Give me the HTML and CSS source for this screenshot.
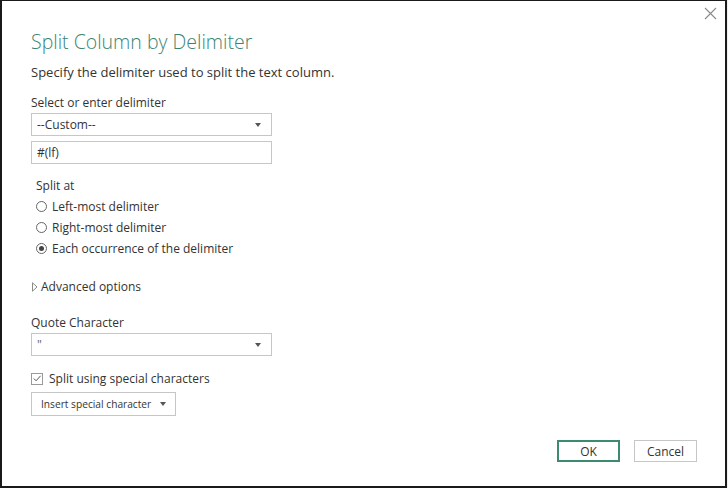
FILE: index.html
```html
<!DOCTYPE html>
<html lang="en">
<head>
    <meta charset="UTF-8">
    <title>Split Column by Delimiter</title>
    <link rel="stylesheet" href="styles.css">
</head>
<body>
    <div class="dialog">
        <div class="close">
            <svg width="13" height="13" viewBox="0 0 13 13"><path d="M1 1 L12 12 M12 1 L1 12" stroke="#8a8a8a" stroke-width="1.1" fill="none"/></svg>
        </div>

        <div class="title">Split Column by Delimiter</div>
        <div class="subtitle">Specify the delimiter used to split the text column.</div>

        <div class="label">Select or enter delimiter</div>
        <div class="select">
            <span>--Custom--</span>
            <span class="caret"></span>
        </div>
        <div class="input">#(lf)</div>

        <div class="split-at">
            <div class="label">Split at</div>
            <div class="radio"><span class="dot"></span>Left-most delimiter</div>
            <div class="radio"><span class="dot"></span>Right-most delimiter</div>
            <div class="radio checked"><span class="dot"></span>Each occurrence of the delimiter</div>
        </div>

        <div class="advanced">
            <svg width="6" height="10" viewBox="0 0 6 10"><path d="M0.5 0.8 L5 5 L0.5 9.2 Z" fill="none" stroke="#8a8a8a" stroke-width="1"/></svg>
            Advanced options
        </div>

        <div class="label">Quote Character</div>
        <div class="select">
            <span class="quote">"</span>
            <span class="caret"></span>
        </div>

        <div class="check">
            <span class="box">
                <svg width="11" height="11" viewBox="0 0 11 11"><path d="M2 5.5 L4.5 8 L9.5 2.5" fill="none" stroke="#555" stroke-width="1.1"/></svg>
            </span>
            Split using special characters
        </div>
        <div class="insert">Insert special character <span class="caret"></span></div>

        <div class="footer">
            <div class="btn ok">OK</div>
            <div class="btn">Cancel</div>
        </div>
    </div>
</body>
</html>
```

FILE: styles.css
```css
* {
    margin: 0;
    padding: 0;
    box-sizing: border-box;
}

body {
    width: 728px;
    height: 488px;
    background: #f0f0f0;
    font-family: 'Open Sans', 'Noto Sans', sans-serif;
    color: #333;
    font-size: 12px;
}

.dialog {
    position: relative;
    width: 727px;
    height: 488px;
    background: #fff;
    border: 2px solid #1a1a1a;
    border-top-width: 1px;
    padding: 27px 29px 0 29px;
}

.close {
    position: absolute;
    top: 6px;
    right: 8px;
}

.title {
    font-size: 19.5px;
    font-weight: 300;
    color: #3a8572;
    line-height: 28px;
}

.subtitle {
    font-size: 13px;
    color: #333;
    margin-top: 6px;
    line-height: 20px;
}

.label {
    line-height: 17px;
}

.subtitle + .label {
    margin-top: 12px;
}

.select,
.input {
    width: 241px;
    height: 23px;
    border: 1px solid #c6c6c6;
    display: flex;
    align-items: center;
    justify-content: space-between;
    padding: 0 10px 0 5px;
    margin-top: 2px;
}

.input {
    margin-top: 5px;
}

.caret {
    width: 0;
    height: 0;
    border-left: 3.5px solid transparent;
    border-right: 3.5px solid transparent;
    border-top: 4px solid #555;
}

.quote {
    color: #666;
}

.split-at {
    padding-left: 5px;
    margin-top: 13px;
}

.split-at .label {
    margin-bottom: 2px;
}

.radio {
    display: flex;
    align-items: center;
    gap: 5px;
    height: 21px;
}

.dot {
    width: 11px;
    height: 11px;
    border: 1px solid #666;
    border-radius: 50%;
    display: flex;
    align-items: center;
    justify-content: center;
}

.checked .dot::after {
    content: "";
    width: 5px;
    height: 5px;
    border-radius: 50%;
    background: #444;
}

.advanced {
    display: flex;
    align-items: center;
    gap: 3px;
    margin-top: 19px;
    margin-left: 1px;
    line-height: 17px;
}

.advanced + .label {
    margin-top: 19px;
}

.check {
    display: flex;
    align-items: center;
    gap: 6px;
    margin-top: 14px;
    line-height: 17px;
}

.box {
    width: 12px;
    height: 12px;
    border: 1px solid #9a9a9a;
    display: flex;
    align-items: center;
    justify-content: center;
}

.insert {
    display: inline-flex;
    align-items: center;
    gap: 9px;
    height: 24px;
    border: 1px solid #c6c6c6;
    padding: 0 9px 0 9px;
    margin-top: 5px;
    font-size: 10.2px;
}

.footer {
    position: absolute;
    right: 28px;
    bottom: 24px;
    display: flex;
    gap: 14px;
}

.btn {
    width: 63px;
    height: 22px;
    border: 1px solid #c6c6c6;
    display: flex;
    align-items: center;
    justify-content: center;
    font-size: 12px;
}

.btn.ok {
    border: 2px solid #3c8a72;
}
```
